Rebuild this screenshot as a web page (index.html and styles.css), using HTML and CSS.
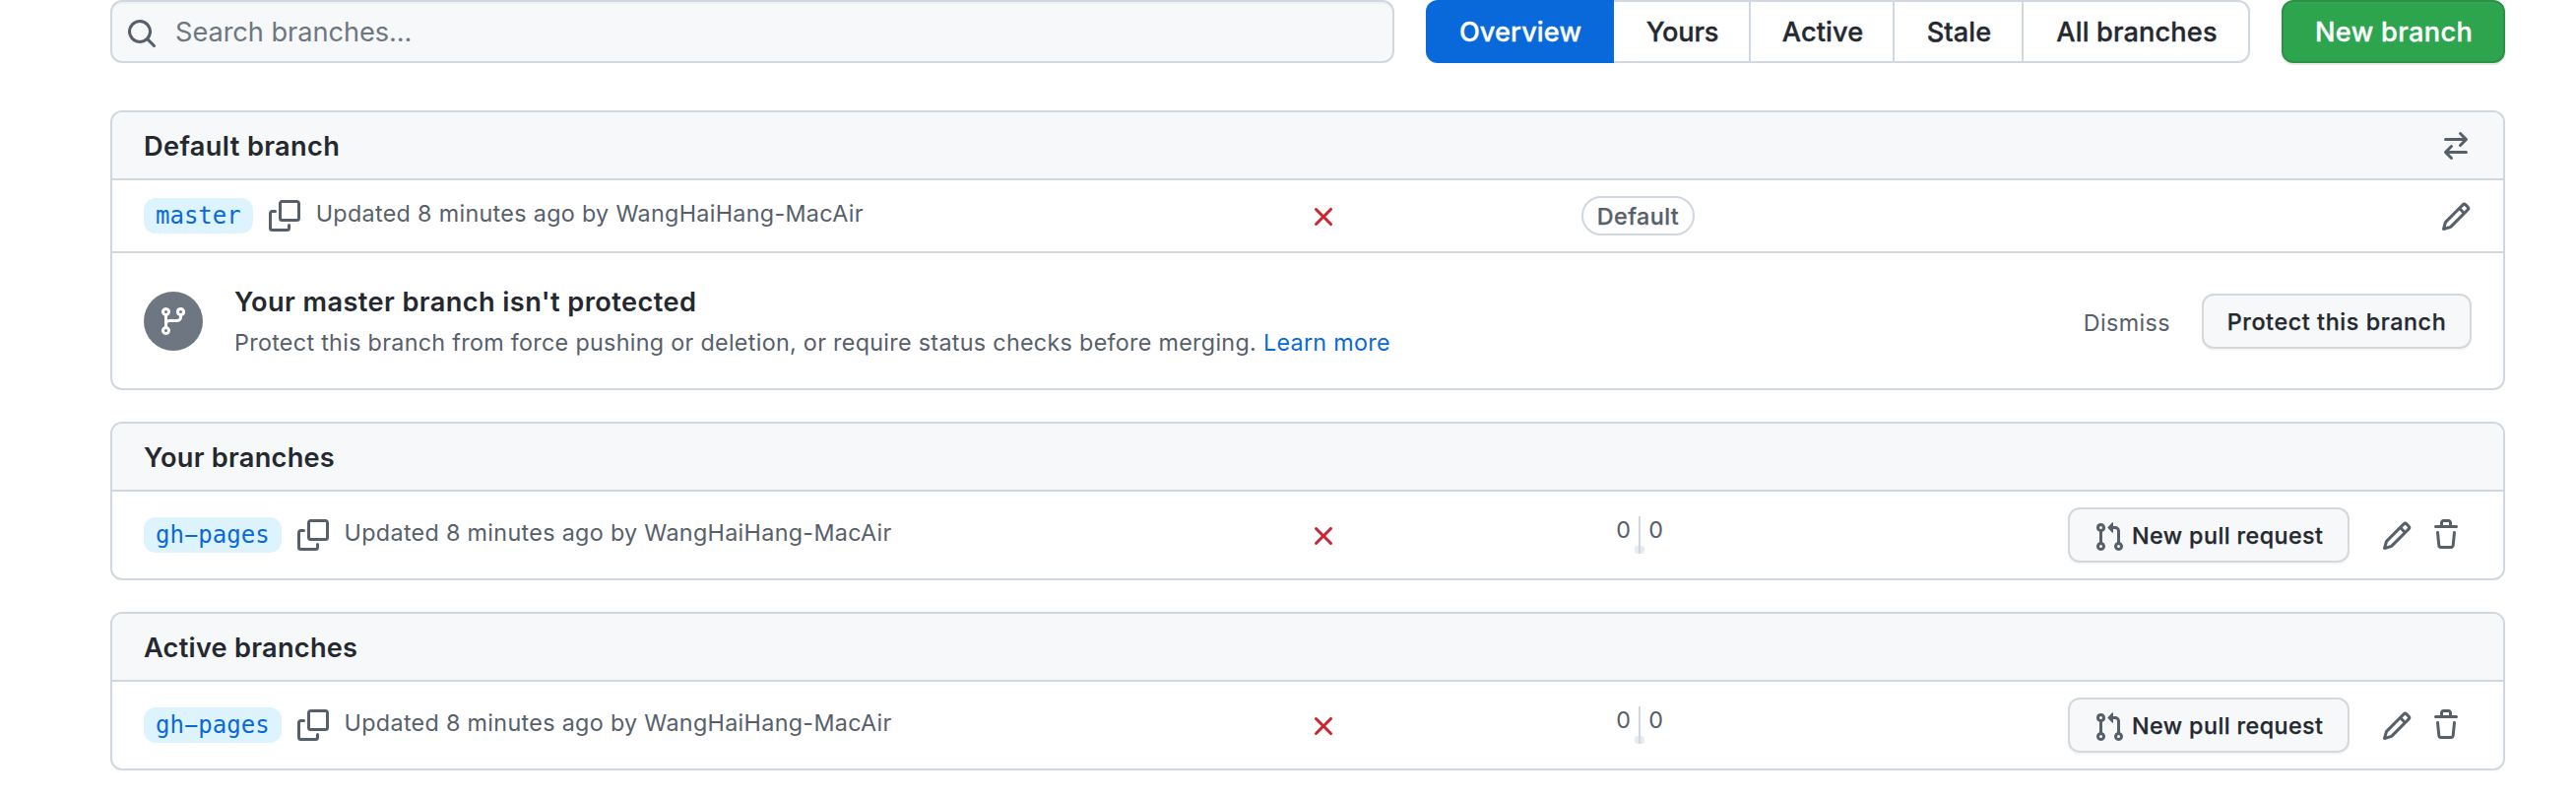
FILE: index.html
```html
<!DOCTYPE html>
<html lang="en">
<head>
<meta charset="utf-8">
<title>Branches</title>
<link rel="stylesheet" href="styles.css">
</head>
<body>
<svg class="sprite" aria-hidden="true">
  <symbol id="search" viewBox="0 0 16 16"><path fill-rule="evenodd" d="M11.5 7a4.499 4.499 0 11-8.998 0A4.499 4.499 0 0111.5 7zm-.82 4.74a6 6 0 111.06-1.06l3.04 3.04a.75.75 0 11-1.06 1.06l-3.04-3.04z"/></symbol>
  <symbol id="switch" viewBox="0 0 16 16"><path fill-rule="evenodd" d="M5.22 14.78a.75.75 0 001.06-1.06L4.56 12h8.69a.75.75 0 000-1.5H4.56l1.72-1.72a.75.75 0 00-1.06-1.06l-3 3a.75.75 0 000 1.06l3 3zm5.56-6.5a.75.75 0 11-1.06-1.06l1.72-1.72H2.75a.75.75 0 010-1.5h8.69L9.72 2.28a.75.75 0 011.06-1.06l3 3a.75.75 0 010 1.06l-3 3z"/></symbol>
  <symbol id="copy" viewBox="0 0 16 16"><path fill-rule="evenodd" d="M0 6.75C0 5.784.784 5 1.75 5h1.5a.75.75 0 010 1.5h-1.5a.25.25 0 00-.25.25v7.5c0 .138.112.25.25.25h7.5a.25.25 0 00.25-.25v-1.5a.75.75 0 011.5 0v1.5A1.75 1.75 0 019.25 16h-7.5A1.75 1.75 0 010 14.25v-7.5z"/><path fill-rule="evenodd" d="M5 1.75C5 .784 5.784 0 6.75 0h7.5C15.216 0 16 .784 16 1.75v7.5A1.75 1.75 0 0114.25 11h-7.5A1.75 1.75 0 015 9.25v-7.5zm1.75-.25a.25.25 0 00-.25.25v7.5c0 .138.112.25.25.25h7.5a.25.25 0 00.25-.25v-7.5a.25.25 0 00-.25-.25h-7.5z"/></symbol>
  <symbol id="cross" viewBox="0 0 16 16"><path fill-rule="evenodd" d="M3.72 3.72a.75.75 0 011.06 0L8 6.94l3.22-3.22a.75.75 0 111.06 1.06L9.06 8l3.22 3.22a.75.75 0 11-1.06 1.06L8 9.06l-3.22 3.22a.75.75 0 01-1.06-1.06L6.94 8 3.72 4.78a.75.75 0 010-1.06z"/></symbol>
  <symbol id="pencil" viewBox="0 0 16 16"><path fill-rule="evenodd" d="M11.013 1.427a1.75 1.75 0 012.474 0l1.086 1.086a1.75 1.75 0 010 2.474l-8.61 8.61c-.21.21-.47.364-.756.445l-3.251.93a.75.75 0 01-.927-.928l.929-3.25a1.75 1.75 0 01.445-.758l8.61-8.61zm1.414 1.06a.25.25 0 00-.354 0L10.811 3.75l1.439 1.44 1.263-1.263a.25.25 0 000-.354l-1.086-1.086zM11.189 6.25L9.75 4.81l-6.286 6.287a.25.25 0 00-.064.108l-.558 1.953 1.953-.558a.249.249 0 00.108-.064l6.286-6.286z"/></symbol>
  <symbol id="trash" viewBox="0 0 16 16"><path fill-rule="evenodd" d="M6.5 1.75a.25.25 0 01.25-.25h2.5a.25.25 0 01.25.25V3h-3V1.75zm4.5 0V3h2.25a.75.75 0 010 1.5H2.75a.75.75 0 010-1.5H5V1.75C5 .784 5.784 0 6.75 0h2.5C10.216 0 11 .784 11 1.75zM4.496 6.675a.75.75 0 10-1.492.15l.66 6.6A1.75 1.75 0 005.405 15h5.19c.9 0 1.652-.681 1.741-1.576l.66-6.6a.75.75 0 00-1.492-.149l-.66 6.6a.25.25 0 01-.249.225h-5.19a.25.25 0 01-.249-.225l-.66-6.6z"/></symbol>
  <symbol id="branch" viewBox="0 0 16 16"><path fill-rule="evenodd" d="M11.75 2.5a.75.75 0 100 1.5.75.75 0 000-1.5zm-2.25.75a2.25 2.25 0 113 2.122V6A2.5 2.5 0 0110 8.5H6a1 1 0 00-1 1v1.128a2.251 2.251 0 11-1.5 0V5.372a2.25 2.25 0 111.5 0v1.836A2.492 2.492 0 016 7h4a1 1 0 001-1v-.628A2.25 2.25 0 019.5 3.25zM4.25 12a.75.75 0 100 1.5.75.75 0 000-1.5zM3.5 3.25a.75.75 0 111.5 0 .75.75 0 01-1.5 0z"/></symbol>
  <symbol id="pull" viewBox="0 0 16 16"><path fill-rule="evenodd" d="M7.177 3.073L9.573.677A.25.25 0 0110 .854v4.792a.25.25 0 01-.427.177L7.177 3.427a.25.25 0 010-.354zM3.75 2.5a.75.75 0 100 1.5.75.75 0 000-1.5zm-2.25.75a2.25 2.25 0 113 2.122v5.256a2.251 2.251 0 11-1.5 0V5.372A2.25 2.25 0 011.5 3.25zM11 2.5h-1V4h1a1 1 0 011 1v5.628a2.251 2.251 0 101.5 0V5A2.5 2.5 0 0011 2.5zm1 10.25a.75.75 0 111.5 0 .75.75 0 01-1.5 0zM3.75 12a.75.75 0 100 1.5.75.75 0 000-1.5z"/></symbol>
</svg>

<header class="toolbar">
  <div class="search"><svg class="icon"><use href="#search"/></svg><span>Search branches...</span></div>
  <nav class="tabs">
    <a class="tab tab-current">Overview</a>
    <a class="tab tab-yours">Yours</a>
    <a class="tab tab-active">Active</a>
    <a class="tab tab-stale">Stale</a>
    <a class="tab tab-all">All branches</a>
  </nav>
  <button class="new-branch">New branch</button>
</header>

<main class="boxes">
  <section class="box">
    <div class="box-header"><h2 class="title-default">Default branch</h2><svg class="icon"><use href="#switch"/></svg></div>
    <div class="row row-default">
      <div class="name"><a class="label">master</a><svg class="icon copy"><use href="#copy"/></svg><span class="updated">Updated 8 minutes ago by WangHaiHang-MacAir</span></div>
      <svg class="icon status"><use href="#cross"/></svg>
      <div class="middle"><span class="pill">Default</span></div>
      <div class="actions"><svg class="icon pencil"><use href="#pencil"/></svg></div>
    </div>
    <div class="notice">
      <div class="badge"><svg class="icon"><use href="#branch"/></svg></div>
      <div class="notice-text">
        <h3>Your master branch isn't protected</h3>
        <p>Protect this branch from force pushing or deletion, or require status checks before merging. <a>Learn more</a></p>
      </div>
      <a class="dismiss">Dismiss</a>
      <button class="btn protect">Protect this branch</button>
    </div>
  </section>

  <section class="box">
    <div class="box-header"><h2>Your branches</h2></div>
    <div class="row">
      <div class="name"><a class="label">gh<span class="dash">-</span>pages</a><svg class="icon copy"><use href="#copy"/></svg><span class="updated">Updated 8 minutes ago by WangHaiHang-MacAir</span></div>
      <svg class="icon status"><use href="#cross"/></svg>
      <div class="middle"><div class="divergence"><span>0</span><i class="divider"></i><span>0</span></div></div>
      <div class="actions actions-full">
        <button class="btn pull-request"><svg class="icon"><use href="#pull"/></svg>New pull request</button>
        <svg class="icon pencil"><use href="#pencil"/></svg>
        <svg class="icon trash"><use href="#trash"/></svg>
      </div>
    </div>
  </section>

  <section class="box">
    <div class="box-header"><h2>Active branches</h2></div>
    <div class="row">
      <div class="name"><a class="label">gh<span class="dash">-</span>pages</a><svg class="icon copy"><use href="#copy"/></svg><span class="updated">Updated 8 minutes ago by WangHaiHang-MacAir</span></div>
      <svg class="icon status"><use href="#cross"/></svg>
      <div class="middle"><div class="divergence"><span>0</span><i class="divider"></i><span>0</span></div></div>
      <div class="actions actions-full">
        <button class="btn pull-request"><svg class="icon"><use href="#pull"/></svg>New pull request</button>
        <svg class="icon pencil"><use href="#pencil"/></svg>
        <svg class="icon trash"><use href="#trash"/></svg>
      </div>
    </div>
  </section>
</main>
</body>
</html>
```

FILE: styles.css
```css
* { box-sizing: border-box; }

body {
  margin: 0;
  padding: 0 72px 0 112px;
  background: #fff;
  color: #24292f;
  font-family: Inter, "Liberation Sans", sans-serif;
  font-size: 23.3px;
  letter-spacing: 0.33px;
}

h2, h3, p { margin: 0; }
button { font-family: inherit; }

.sprite { display: none; }
.icon { width: 32px; height: 32px; flex: none; display: block; fill: #57606a; }

/* Toolbar */
.toolbar { display: flex; gap: 32px; height: 64px; font-size: 27.2px; letter-spacing: 0.1px; }

.search {
  display: flex;
  align-items: center;
  gap: 18px;
  flex: 1;
  padding: 0 14px;
  border: 2px solid #d0d7de;
  border-radius: 12px;
  background: #f6f8fa;
  box-shadow: inset 0 2px 0 rgba(208, 215, 222, 0.2);
  color: #6e7781;
  letter-spacing: -0.06px;
}
.search .icon { margin-top: 4px; }

.tabs { display: flex; }
.tab {
  display: flex;
  align-items: center;
  justify-content: center;
  padding-left: 2px;
  border: 2px solid #d0d7de;
  border-left: 0;
  font-weight: 500;
  -webkit-text-stroke: 0.35px currentColor;
}
.tab-current {
  width: 191px;
  padding-left: 3px;
  border-color: #0969da;
  border-radius: 12px 0 0 12px;
  background: #0969da;
  color: #fff;
}
.tab-yours { width: 139px; letter-spacing: -0.2px; }
.tab-active { width: 146px; }
.tab-stale { width: 131px; }
.tab-all { width: 230px; border-radius: 0 12px 12px 0; letter-spacing: 0.12px; }

.new-branch {
  width: 227px;
  padding: 0 0 0 1px;
  border: 2px solid #2a9147;
  border-radius: 12px;
  background: #2da44e;
  box-shadow: 0 2px 0 rgba(27, 31, 36, 0.1), inset 0 2px 0 rgba(255, 255, 255, 0.03);
  color: #fff;
  font-size: 27.2px;
  font-weight: 500;
  letter-spacing: 0.33px;
  -webkit-text-stroke: 0.35px currentColor;
}

/* Branch boxes */
.boxes { display: flex; flex-direction: column; gap: 32px; padding-top: 48px; }
.box { border: 2px solid #d0d7de; border-radius: 12px; overflow: hidden; }

.box-header {
  display: flex;
  align-items: center;
  justify-content: space-between;
  height: 69px;
  padding: 1px 32px 0;
  border-bottom: 2px solid #d0d7de;
  background: #f6f8fa;
}
.box-header h2 { padding-top: 1px; font-size: 27.2px; line-height: 42px; font-weight: 600; letter-spacing: 0.25px; }
.box-header .title-default { letter-spacing: 0.36px; }

.row {
  display: grid;
  grid-template-columns: 1182px 32px 607px 1fr;
  align-items: center;
  height: 88px;
  padding: 0 32px;
}
.row-default { height: 74px; border-bottom: 2px solid #d0d7de; }

.name { display: flex; align-items: center; }
.label {
  height: 36px;
  padding: 0 12px;
  border-radius: 12px;
  background: #ddf4ff;
  color: #0969da;
  font: 24px/36px "DejaVu Sans Mono", monospace;
  letter-spacing: 0;
}
/* Widen the short monospace hyphen to the full cell */
.dash { text-shadow: 3px 0 0 currentColor, -3px 0 0 currentColor; }
.copy { margin: 0 16px; }
.updated { padding-bottom: 6px; color: #57606a; letter-spacing: 0.33px; white-space: nowrap; }
.status { margin-top: 2px; fill: #cf222e; }
.middle { display: flex; justify-content: center; color: #57606a; }

.pill {
  height: 40px;
  padding: 0 14px;
  border: 2px solid #d0d7de;
  border-radius: 20px;
  font-weight: 500;
  line-height: 37px;
  letter-spacing: 0.45px;
  -webkit-text-stroke: 0.25px currentColor;
}

.divergence { display: flex; gap: 8px; height: 38px; padding-left: 3px; line-height: 27px; }
.divergence span { width: 15px; text-align: center; letter-spacing: 0; }
.divider { position: relative; width: 2px; background: #d0d7de; }
.divider::before {
  content: "";
  position: absolute;
  z-index: -1;
  left: -4px;
  bottom: 0;
  width: 10px;
  height: 8px;
  border-radius: 3px;
  background: #e7eaef;
}

.actions { display: flex; justify-content: flex-end; align-items: center; }
.actions-full { padding-right: 10px; }
.pencil { margin-top: 2px; }
.trash { margin-left: 18px; }
.actions-full .pencil { margin-left: 32px; }

.btn {
  display: flex;
  align-items: center;
  height: 56px;
  padding: 0;
  border: 2px solid #d5d8da;
  border-radius: 12px;
  background: #f6f8fa;
  box-shadow: 0 2px 0 rgba(27, 31, 36, 0.04);
  color: #24292f;
  font-size: 23.3px;
  font-weight: 500;
  -webkit-text-stroke: 0.25px currentColor;
}
.pull-request { width: 286px; padding-left: 24px; gap: 7px; letter-spacing: 0.42px; white-space: nowrap; }
.pull-request .icon { margin-top: 4px; }

/* Protection notice */
.notice { display: flex; align-items: center; height: 137px; padding: 0 32px; }
.badge {
  display: flex;
  align-items: center;
  justify-content: center;
  width: 60px;
  height: 60px;
  border-radius: 50%;
  background: #6e7781;
}
.badge .icon { fill: #fff; }
.notice-text { flex: 1; padding: 2px 0 0 32px; }
.notice-text h3 { font-size: 27.2px; line-height: 42px; font-weight: 600; letter-spacing: 0.4px; }
.notice-text p { line-height: 39px; color: #57606a; letter-spacing: 0.31px; }
.notice-text a { color: #0969da; }
.dismiss { margin: 3px 32px 0 0; color: #57606a; letter-spacing: 0.4px; }
.protect { width: 274px; padding-top: 1px; justify-content: center; letter-spacing: 0.6px; }
```
